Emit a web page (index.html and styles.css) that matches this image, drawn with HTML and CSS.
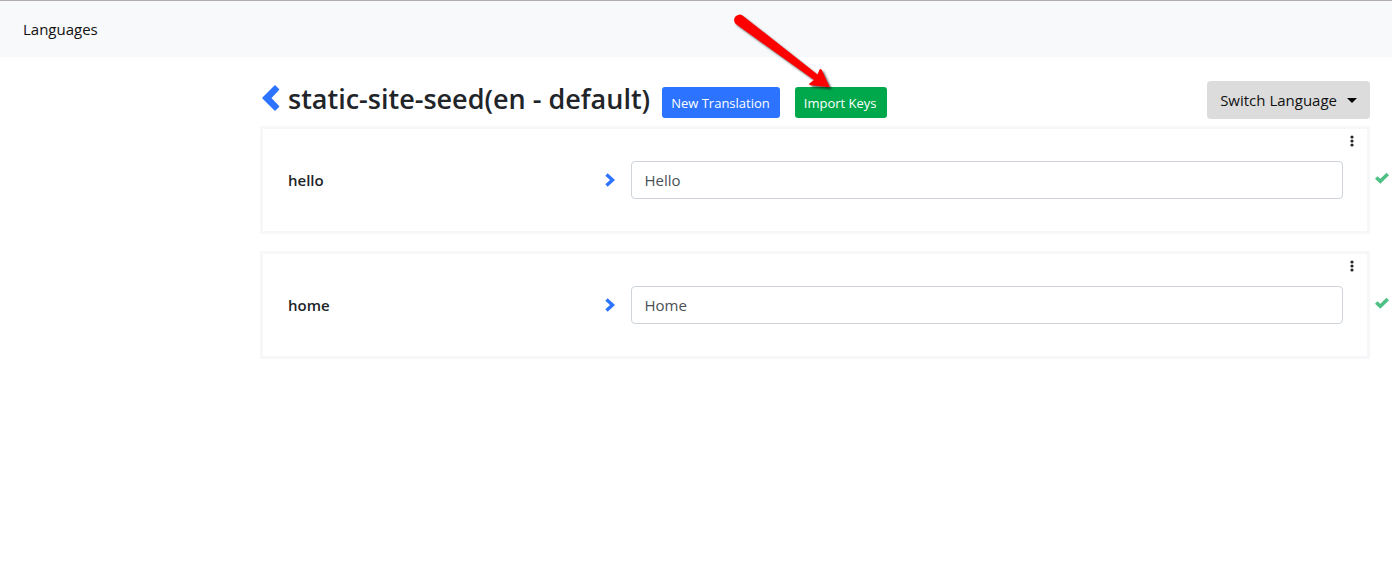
FILE: index.html
```html
<!DOCTYPE html>
<html lang="en">
<head>
<meta charset="utf-8">
<title>Translations</title>
<link rel="stylesheet" href="styles.css">
</head>
<body>
<header class="navbar"><a class="nav-link" href="#">Languages</a></header>
<main class="content">
  <div class="toolbar">
    <a class="back" href="#" aria-label="Back"><svg width="18" height="26" viewBox="0 0 18 26"><path d="M13 1 16.500 4.500 8.500 13l8 8.500L13 25 1 13z" fill="#2c73ff" stroke="#2c73ff" stroke-width="1.500" stroke-linejoin="round"/></svg></a>
    <h1 class="title">static-site-seed(en - default)</h1>
    <button class="btn btn-primary" type="button">New Translation</button>
    <div class="import">
      <button class="btn btn-success" type="button">Import Keys</button>
      <svg class="arrow" width="110" height="90" viewBox="730 10 110 90" aria-hidden="true"><path d="M735.200 24.300a5.400 5.400 0 0 1 6.600-8.600L816.500 74.500l2-5q1.200-1.200 2.300.5l8 17.300-19.300-2q-2-.8-1-2l4.500-3.300z" fill="#f00"/></svg>
    </div>
    <button class="btn-switch" type="button">Switch Language <span class="caret"></span></button>
  </div>
  <section class="card">
    <label class="key" for="hello">hello</label>
    <svg class="chevron" width="10" height="14" viewBox="0 0 10 14"><path d="M1.500 1.500 7.500 7 1.500 12.500" fill="none" stroke="#2c73ff" stroke-width="3.400"/></svg>
    <input class="field" id="hello" type="text" value="Hello">
    <button class="more" type="button" aria-label="More options"><svg width="4" height="12" viewBox="0 0 4 12" fill="#212529"><circle cx="2" cy="2" r="1.600"/><circle cx="2" cy="6" r="1.600"/><circle cx="2" cy="10" r="1.600"/></svg></button>
    <svg class="check" width="14" height="12" viewBox="0 0 14 12"><path d="M1.200 5.500 5.300 9.300 12.800 2" fill="none" stroke="#4dc085" stroke-width="3.600"/></svg>
  </section>
  <section class="card">
    <label class="key" for="home">home</label>
    <svg class="chevron" width="10" height="14" viewBox="0 0 10 14"><path d="M1.500 1.500 7.500 7 1.500 12.500" fill="none" stroke="#2c73ff" stroke-width="3.400"/></svg>
    <input class="field" id="home" type="text" value="Home">
    <button class="more" type="button" aria-label="More options"><svg width="4" height="12" viewBox="0 0 4 12" fill="#212529"><circle cx="2" cy="2" r="1.600"/><circle cx="2" cy="6" r="1.600"/><circle cx="2" cy="10" r="1.600"/></svg></button>
    <svg class="check" width="14" height="12" viewBox="0 0 14 12"><path d="M1.200 5.500 5.300 9.300 12.800 2" fill="none" stroke="#4dc085" stroke-width="3.600"/></svg>
  </section>
</main>
</body>
</html>
```
FILE: styles.css
```css
* { box-sizing: border-box; }
body { margin: 0; background: #fff; color: #212529; font: 15px/24px "Open Sans", "Noto Sans", sans-serif; }
button, input { font: inherit; }
svg { display: block; }
.navbar { padding: 16px 23px; border-top: 1px solid #b2adb2; background: #f8f9fb; }
.nav-link { display: block; color: #111; text-decoration: none; }
.content { padding: 24px 22px 24px 260px; }
.toolbar { display: flex; align-items: center; margin-bottom: 7px; }
.back { padding: 0 8px 4px 2px; }
.title { margin: 0 12px 2px 0; font-size: 27px; line-height: 36px; font-weight: 600; white-space: nowrap; }
.btn { display: block; height: 31px; margin: 5px 15px 0 0; padding: 0 10px 0 9px; border: 0; border-radius: 3px; color: #fff; font-size: 13px; white-space: nowrap; }
.btn-primary { background: #2c73ff; }
.btn-success { background: #00a84c; }
.import { position: relative; }
.arrow { position: absolute; left: -64px; top: -72px; filter: drop-shadow(2px 2px 1px #0009); pointer-events: none; }
.btn-switch { display: flex; align-items: center; gap: 10px; height: 38px; margin-left: auto; padding: 0 13px; border: 0; border-radius: 4px; background: #dcdcdc; color: #111; white-space: nowrap; }
.caret { border: 5px solid transparent; border-top-color: #000; border-bottom: 0; }
.card { position: relative; display: grid; grid-template-columns: 30% 26px 1fr; align-items: center; margin-bottom: 17px; padding: 32px 24px 32px 25px; border: 3px solid #f7f7f9; }
.key { font-weight: 600; }
.field { width: 100%; height: 38px; margin: 0; padding: 0 13px; border: 1px solid #ced4da; border-radius: 4px; background: #fff; color: #495057; }
.more { position: absolute; top: 6px; right: 13px; padding: 0; border: 0; background: none; }
.check { position: absolute; top: 43px; right: -22px; }
```
